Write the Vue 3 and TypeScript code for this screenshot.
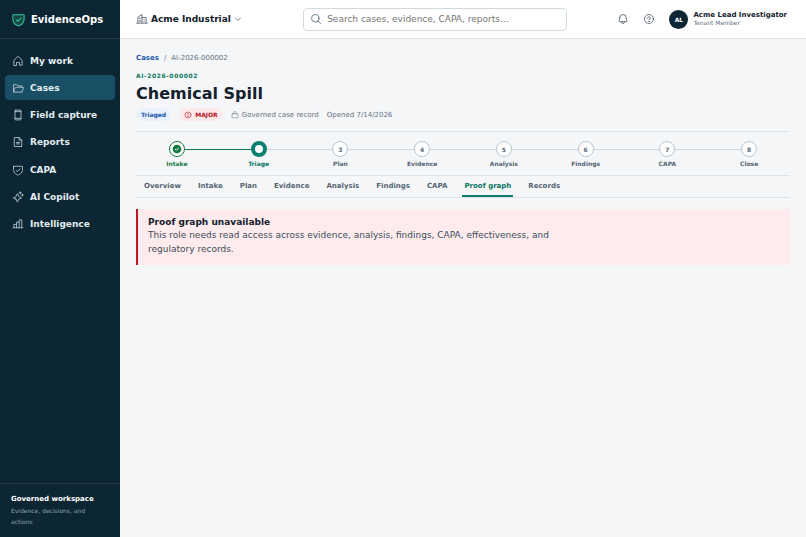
<script setup lang="ts">
import { ref } from 'vue'

interface NavItem {
  label: string
  icon: string[]
}

const shield = ['M40 48h176a8 8 0 0 1 8 8v58c0 88-76 116-94 122a8 8 0 0 1-4 0C108 230 32 202 32 114V56a8 8 0 0 1 8-8Z', 'M88 136l26 24 58-56']

const navItems: NavItem[] = [
  { label: 'My work', icon: ['M40 216V116a8 8 0 0 1 2-6l80-76a8 8 0 0 1 12 0l80 76a8 8 0 0 1 2 6v100h-56v-56h-64v56Z'] },
  { label: 'Cases', icon: ['M32 208V64a8 8 0 0 1 8-8h54l32 24h74a8 8 0 0 1 8 8v24', 'M32 208l38-90a8 8 0 0 1 7-6h159a8 8 0 0 1 8 10l-28 86Z'] },
  { label: 'Field capture', icon: ['M80 24h96a16 16 0 0 1 16 16v176a16 16 0 0 1-16 16H80a16 16 0 0 1-16-16V40a16 16 0 0 1 16-16Z', 'M64 56h128', 'M64 200h128'] },
  { label: 'Reports', icon: ['M200 224H56a8 8 0 0 1-8-8V40a8 8 0 0 1 8-8h96l56 56v128a8 8 0 0 1-8 8Z', 'M152 32v56h56', 'M96 136h64', 'M96 168h64'] },
  { label: 'CAPA', icon: shield },
  { label: 'AI Copilot', icon: ['M84 172L34 154a8 8 0 0 1 0-15l50-19a8 8 0 0 0 5-5l19-50a8 8 0 0 1 15 0l19 50a8 8 0 0 0 5 5l50 19a8 8 0 0 1 0 15l-50 18a8 8 0 0 0-5 5l-19 50a8 8 0 0 1-15 0l-19-50a8 8 0 0 0-5-5Z', 'M176 16v48', 'M152 40h48', 'M224 72v32', 'M208 88h32'] },
  { label: 'Intelligence', icon: ['M24 208h208', 'M40 208v-72h56', 'M96 208V88h56', 'M152 208V40h56v168'] },
]
const activeNav = ref('Cases')

const steps: string[] = ['Intake', 'Triage', 'Plan', 'Evidence', 'Analysis', 'Findings', 'CAPA', 'Close']
const currentStep = 1

const tabs: string[] = ['Overview', 'Intake', 'Plan', 'Evidence', 'Analysis', 'Findings', 'CAPA', 'Proof graph', 'Records']
const activeTab = ref('Proof graph')

const query = ref('')

function stepState(index: number): string {
  if (index < currentStep) return 'done'
  return index === currentStep ? 'current' : 'upcoming'
}
</script>

<template>
  <div class="shell">
    <aside class="sidebar">
      <div class="brand">
        <svg class="icon brand-icon" viewBox="0 0 256 256"><path v-for="d in shield" :key="d" :d="d" /></svg>
        <span>EvidenceOps</span>
      </div>
      <nav class="nav" aria-label="Primary">
        <a
          v-for="item in navItems"
          :key="item.label"
          href="#"
          class="nav-item"
          :class="{ active: item.label === activeNav }"
          @click.prevent="activeNav = item.label"
        >
          <svg class="icon" viewBox="0 0 256 256"><path v-for="d in item.icon" :key="d" :d="d" /></svg>
          <span>{{ item.label }}</span>
        </a>
      </nav>
      <div class="side-foot">
        <strong>Governed workspace</strong>
        <span>Evidence, decisions, and actions</span>
      </div>
    </aside>

    <div class="workspace">
      <header class="topbar">
        <button type="button" class="tenant">
          <svg class="icon tenant-icon" viewBox="0 0 256 256">
            <path d="M16 216h224" /><path d="M40 216V88l88-56v184" /><path d="M128 96h88v120" />
            <path d="M72 112v8M72 160v16M100 112v8M100 160v16M172 136v8M172 176v8" />
          </svg>
          <span>Acme Industrial</span>
          <svg class="icon caret" viewBox="0 0 256 256"><path d="M48 96l80 80 80-80" /></svg>
        </button>
        <label class="search">
          <svg class="icon" viewBox="0 0 256 256"><circle cx="112" cy="112" r="80" /><path d="M169 169l55 55" /></svg>
          <input v-model="query" type="search" aria-label="Search" placeholder="Search cases, evidence, CAPA, reports…" />
        </label>
        <div class="account">
          <button type="button" class="icon-button" aria-label="Notifications">
            <svg class="icon" viewBox="0 0 256 256"><path d="M56 104a72 72 0 0 1 144 0c0 36 8 57 15 68a8 8 0 0 1-7 12H48a8 8 0 0 1-7-12c7-11 15-32 15-68Z" /><path d="M96 192a32 32 0 0 0 64 0" /></svg>
          </button>
          <button type="button" class="icon-button" aria-label="Help">
            <svg class="icon" viewBox="0 0 256 256"><circle cx="128" cy="128" r="96" /><path d="M128 144v-8c18 0 32-13 32-28s-14-28-32-28-32 13-32 28v4" /><circle class="solid" cx="128" cy="180" r="5" /></svg>
          </button>
          <span class="avatar">AL</span>
          <div class="person">
            <strong>Acme Lead Investigator</strong>
            <span>Tenant Member</span>
          </div>
        </div>
      </header>

      <main class="content">
        <nav class="crumbs" aria-label="Breadcrumb">
          <a href="#">Cases</a><span>/</span><span>AI-2026-000002</span>
        </nav>
        <p class="eyebrow">AI-2026-000002</p>
        <h1>Chemical Spill</h1>
        <div class="meta">
          <span class="badge status">Triaged</span>
          <span class="badge severity">
            <svg class="icon" viewBox="0 0 256 256"><circle cx="128" cy="128" r="96" /><path d="M128 80v56" /><circle class="solid" cx="128" cy="172" r="4" /></svg>
            MAJOR
          </span>
          <span class="record">
            <svg class="icon" viewBox="0 0 256 256"><path d="M40 88h176a8 8 0 0 1 8 8v112a8 8 0 0 1-8 8H40a8 8 0 0 1-8-8V96a8 8 0 0 1 8-8Z" /><path d="M88 88V56a40 40 0 0 1 80 0v32" /></svg>
            Governed case record
          </span>
          <span>Opened 7/14/2026</span>
        </div>

        <ol class="stepper">
          <li v-for="(step, i) in steps" :key="step" class="step" :class="stepState(i)">
            <div class="track">
              <span class="line" />
              <span class="dot">
                <svg v-if="i < currentStep" viewBox="0 0 16 16"><circle cx="8" cy="8" r="7" /><path d="M5 8l2 2 4-4" /></svg>
                <template v-else-if="i > currentStep">{{ i + 1 }}</template>
              </span>
              <span class="line" />
            </div>
            <span class="step-label">{{ step }}</span>
          </li>
        </ol>

        <nav class="tabs" aria-label="Case sections">
          <a
            v-for="tab in tabs"
            :key="tab"
            href="#"
            class="tab"
            :class="{ active: tab === activeTab }"
            @click.prevent="activeTab = tab"
          >{{ tab }}</a>
        </nav>

        <section class="alert" role="alert">
          <h2>Proof graph unavailable</h2>
          <p>This role needs read access across evidence, analysis, findings, CAPA, effectiveness, and regulatory records.</p>
        </section>
      </main>
    </div>
  </div>
</template>

<style>
body {
  margin: 0;
  background: #f4f6f8;
}
</style>

<style scoped>
.shell {
  display: grid;
  grid-template-columns: 120px minmax(0, 1fr);
  min-height: 100vh;
  font-family: "DejaVu Sans", sans-serif;
  font-size: 7px;
  color: #14202b;
}
a {
  color: inherit;
  text-decoration: none;
}
button {
  padding: 0;
  border: 0;
  background: none;
  color: inherit;
  font: inherit;
}
.icon {
  flex: none;
  width: 12px;
  height: 12px;
  fill: none;
  stroke: currentColor;
  stroke-width: 17;
  stroke-linecap: round;
  stroke-linejoin: round;
}
.icon .solid {
  fill: currentColor;
}
.sidebar {
  display: flex;
  flex-direction: column;
  background: #0d2633;
  color: #e3edf2;
}
.brand {
  display: flex;
  align-items: center;
  gap: 5px;
  box-sizing: border-box;
  height: 39px;
  padding-left: 11px;
  border-bottom: 1px solid #233a46;
  color: #fff;
  font-size: 10px;
  font-weight: 700;
}
.brand-icon {
  width: 15px;
  height: 15px;
  color: #35c2a1;
  fill: #174944;
  stroke-width: 18;
}
.brand-icon path:last-child {
  fill: none;
}
.nav {
  display: flex;
  flex-direction: column;
  justify-content: space-between;
  min-height: 189px;
  padding: 9px 5px;
}
.nav-item {
  display: flex;
  align-items: center;
  gap: 6px;
  height: 25px;
  padding-left: 7px;
  border-radius: 4px;
  font-size: 9px;
  font-weight: 700;
}
.nav-item .icon {
  color: #c3d2da;
}
.nav-item.active {
  background: #1a5066;
}
.side-foot {
  display: grid;
  gap: 1px;
  margin-top: auto;
  padding: 10px 14px 10px 11px;
  border-top: 1px solid #233a46;
  font-size: 6px;
  line-height: 11px;
  color: #8fa5b1;
}
.side-foot strong {
  font-size: 7px;
  line-height: 10px;
  color: #fff;
}
.workspace {
  min-width: 0;
}
.topbar {
  display: grid;
  grid-template-columns: minmax(0, 3fr) 264px minmax(0, 4fr);
  align-items: center;
  box-sizing: border-box;
  height: 39px;
  padding: 0 16px;
  border-bottom: 1px solid #dce2e7;
  background: #fff;
}
.tenant {
  display: flex;
  align-items: center;
  gap: 3px;
  font-size: 9px;
  font-weight: 700;
}
.tenant-icon,
.caret {
  color: #4c5b68;
}
.caret {
  width: 8px;
  height: 8px;
  stroke-width: 24;
}
.search {
  display: flex;
  align-items: center;
  gap: 5px;
  box-sizing: border-box;
  height: 23px;
  padding: 0 6px;
  border: 1px solid #cfdae1;
  border-radius: 4px;
  color: #4c5b68;
}
.search input {
  flex: 1;
  min-width: 0;
  padding: 0;
  border: 0;
  outline: 0;
  background: none;
  font: inherit;
  font-size: 9px;
}
.search input::placeholder {
  color: #757575;
}
.account {
  display: flex;
  align-items: center;
  justify-content: flex-end;
  padding-right: 3px;
}
.icon-button {
  display: flex;
  margin-right: 14px;
  color: #4c5b68;
}
.avatar {
  display: grid;
  place-items: center;
  width: 19px;
  height: 19px;
  margin-right: 5px;
  border-radius: 50%;
  background: #0d2633;
  color: #fff;
  font-size: 6px;
  font-weight: 700;
}
.person {
  display: grid;
  line-height: 8px;
  white-space: nowrap;
}
.person span {
  font-size: 6px;
  color: #657482;
}
.content {
  padding: 15px 16px;
}
.crumbs {
  display: flex;
  gap: 5px;
  line-height: 9px;
  color: #657482;
}
.crumbs a {
  color: #1f5fae;
  font-weight: 700;
}
.eyebrow {
  margin: 8px 0 0;
  color: #08745f;
  font-size: 6px;
  font-weight: 700;
  line-height: 9px;
  letter-spacing: 0.1em;
}
h1 {
  margin: 4px 0;
  font-size: 16px;
  line-height: 20px;
}
.meta {
  display: flex;
  align-items: center;
  gap: 8px;
  height: 13px;
  margin-bottom: 10px;
  color: #657482;
}
.badge {
  display: flex;
  align-items: center;
  gap: 3px;
  height: 13px;
  padding: 0 5px;
  border-radius: 7px;
  font-size: 6px;
  font-weight: 700;
}
.meta .icon {
  width: 8px;
  height: 8px;
}
.status {
  background: #e8f1fc;
  color: #1b57a8;
}
.severity {
  background: #fde8ea;
  color: #b4111d;
}
.record {
  display: flex;
  align-items: center;
  gap: 3px;
}
.stepper {
  display: grid;
  grid-template-columns: repeat(8, minmax(0, 1fr));
  margin: 0;
  padding: 9px 0 7px;
  border-top: 1px solid #dce2e7;
  border-bottom: 1px solid #dce2e7;
  list-style: none;
}
.step {
  display: grid;
  gap: 2px;
  color: #566573;
  text-align: center;
}
.track {
  display: flex;
  align-items: center;
}
.line {
  flex: 1;
  height: 1px;
  background: #cbd5dc;
}
.step:first-child .line:first-child,
.step:last-child .line:last-child {
  background: none;
}
.step.done .line:last-child,
.step.current .line:first-child {
  background: #187a45;
}
.dot {
  display: grid;
  place-items: center;
  box-sizing: border-box;
  width: 16px;
  height: 16px;
  border: 1px solid #b9c6cf;
  border-radius: 50%;
  background: #fff;
  font-size: 6px;
  font-weight: 700;
}
.done .dot {
  border-color: #187a45;
}
.dot svg {
  width: 10px;
  height: 10px;
}
.dot circle {
  fill: #187a45;
}
.dot path {
  fill: none;
  stroke: #fff;
  stroke-width: 1.5;
}
.current .dot {
  border: 4px solid #08806e;
}
.step-label {
  font-size: 6px;
  font-weight: 700;
  line-height: 9px;
}
.done .step-label {
  color: #187a45;
}
.current .step-label {
  color: #08745f;
}
.tabs {
  display: flex;
  gap: 13px;
  padding-left: 6px;
  border-bottom: 1px solid #dce2e7;
  color: #566573;
}
.tab {
  padding: 2px 2px 0;
  border-bottom: 2px solid transparent;
  font-weight: 700;
  line-height: 17px;
}
.tab.active {
  border-color: #08806e;
  color: #08745f;
}
.alert {
  margin-top: 11px;
  padding: 7px 10px 9px;
  border-left: 2px solid #bd1622;
  background: #fdebee;
}
.alert h2 {
  margin: 0;
  font-size: 9px;
  line-height: 12px;
}
.alert p {
  max-width: 410px;
  margin: 0;
  color: #3e4c59;
  font-size: 9px;
  line-height: 14px;
}
</style>
